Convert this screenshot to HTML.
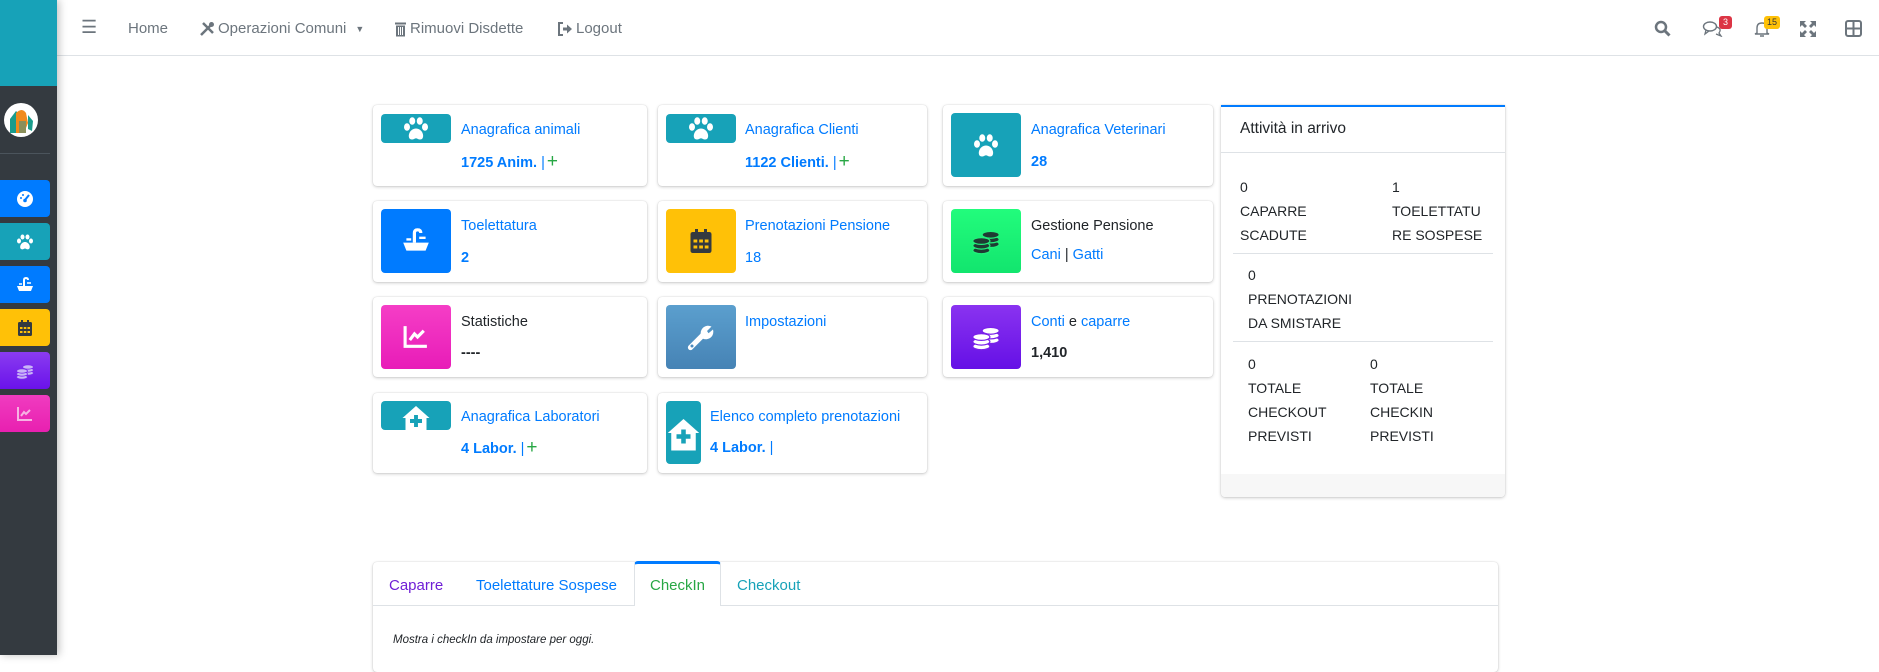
<!DOCTYPE html>
<html><head><meta charset="utf-8"><style>
*{box-sizing:border-box;margin:0;padding:0}
body{width:1879px;height:655px;overflow:hidden;background:#fff;font-family:"Liberation Sans",sans-serif;position:relative;color:#212529}
.a{position:absolute}
#side{left:0;top:0;width:57px;height:655px;background:#343a40;box-shadow:2px 0 8px rgba(0,0,0,.25);z-index:3}
#side .top{left:0;top:0;width:57px;height:86px;background:#17a2b8}
.sb{left:0;width:50px;height:37px;border-radius:0 4px 4px 0;display:flex;align-items:center;justify-content:center}
#nav{left:57px;top:0;width:1822px;height:56px;border-bottom:1px solid #dee2e6;background:#fff}
.ni{top:20px;font-size:15px;color:#6c757d;white-space:nowrap;display:flex;align-items:center;gap:3px}
.card{background:#fff;border-radius:4px;box-shadow:0 0 1px rgba(0,0,0,.2),0 1px 3px rgba(0,0,0,.2)}
.ib{position:absolute;border-radius:4px;display:flex;align-items:center;justify-content:center}
.t1{position:absolute;font-size:14.5px;color:#007bff;white-space:nowrap;line-height:18px}
.t2{position:absolute;font-size:14.5px;font-weight:bold;color:#007bff;white-space:nowrap;line-height:18px}
.plus{color:#28a745;font-weight:normal;font-size:19px;margin-left:2px}
.bar{font-weight:normal}
.rt{position:absolute;font-size:14px;color:#212529;line-height:24px}
.tab{position:absolute;top:577px;font-size:15px}
</style></head><body>
<div id="side" class="a">
 <div class="a top"></div>
 <div class="a" style="left:4px;top:103px;width:34px;height:34px;border-radius:50%;background:#fff;overflow:hidden">
  <svg width="34" height="34" viewBox="0 0 34 34"><path d="M6 30 L6 16 L12 8 L16 12 L14 30Z" fill="#1a9c8c"/><path d="M12 10 Q18 4 22 10 L24 20 L20 30 L12 30Z" fill="#f08a1c"/><path d="M15 18 L22 18 L22 30 L15 30Z" fill="#8a8f5a"/><path d="M24 12 L29 18 L28 28 L24 26Z" fill="#1a9c8c"/></svg>
 </div>
 <div class="a" style="left:0;top:153px;width:50px;height:1px;background:#4b545c"></div>
 <div class="a sb" style="top:180px;background:#007bff"><svg width="18" height="18" viewBox="0 0 18 18"><circle cx="9" cy="9" r="8" fill="#fff"/><path d="M9 10 L13 5" stroke="#007bff" stroke-width="2"/><circle cx="9" cy="10.5" r="1.8" fill="#007bff"/><circle cx="5" cy="8" r="1" fill="#007bff"/><circle cx="7" cy="5" r="1" fill="#007bff"/></svg></div>
 <div class="a sb" style="top:223px;background:#17a2b8"><svg width="20" height="18" viewBox="0 0 20 18"><ellipse cx="4" cy="8" rx="2" ry="2.5" fill="#fff"/><ellipse cx="7.5" cy="4" rx="2" ry="2.5" fill="#fff"/><ellipse cx="12.5" cy="4" rx="2" ry="2.5" fill="#fff"/><ellipse cx="16" cy="8" rx="2" ry="2.5" fill="#fff"/><path d="M10 9 C14 9 16 14 14 16 C12 17 11 15.5 10 15.5 C9 15.5 8 17 6 16 C4 14 6 9 10 9Z" fill="#fff"/></svg></div>
 <div class="a sb" style="top:266px;background:#007bff"><svg width="20" height="18" viewBox="0 0 20 18"><path d="M2 10 H18 L16 15 H4Z" fill="#fff"/><path d="M9 10 V4 Q9 2 11 2 Q13 2 13 4" stroke="#fff" stroke-width="2" fill="none"/><path d="M4 8 H7 M12 7 H16" stroke="#fff" stroke-width="1.5"/></svg></div>
 <div class="a sb" style="top:309px;background:#ffc107"><svg width="16" height="18" viewBox="0 0 16 18"><rect x="1" y="3" width="14" height="14" rx="1.5" fill="#343a40"/><rect x="4" y="1" width="2" height="4" fill="#343a40"/><rect x="10" y="1" width="2" height="4" fill="#343a40"/><g fill="#ffc107"><rect x="3" y="8" width="2.5" height="2"/><rect x="6.8" y="8" width="2.5" height="2"/><rect x="10.5" y="8" width="2.5" height="2"/><rect x="3" y="12" width="2.5" height="2"/><rect x="6.8" y="12" width="2.5" height="2"/><rect x="10.5" y="12" width="2.5" height="2"/></g></svg></div>
 <div class="a sb" style="top:352px;background:linear-gradient(#8a3cf0,#6a12ea)"><svg width="20" height="18" viewBox="0 0 20 18"><g fill="#c9b4f7" stroke="#7a28ee" stroke-width=".8"><ellipse cx="13" cy="11" rx="5.5" ry="2.2"/><ellipse cx="13" cy="8" rx="5.5" ry="2.2"/><ellipse cx="13" cy="5" rx="5.5" ry="2.2"/><ellipse cx="7" cy="15" rx="5.5" ry="2.2"/><ellipse cx="7" cy="12" rx="5.5" ry="2.2"/><ellipse cx="7" cy="9" rx="5.5" ry="2.2"/></g></svg></div>
 <div class="a sb" style="top:395px;background:linear-gradient(#f03cc0,#e820b0)"><svg width="18" height="16" viewBox="0 0 18 16"><path d="M2 1 V14 H16" stroke="#f6b3e3" stroke-width="2" fill="none"/><path d="M5 10 L8 6 L10 8 L14 4" stroke="#f6b3e3" stroke-width="2" fill="none"/></svg></div>
</div>

<div id="nav" class="a">
 <div class="a ni" style="left:24px;top:17px;font-size:18px">&#9776;</div>
 <div class="a ni" style="left:71px">Home</div>
 <div class="a ni" style="left:142px"><svg width="16" height="16" viewBox="0 0 16 16"><path d="M2 14 L12 4 M4 2 L14 12" stroke="#6c757d" stroke-width="2.5"/><circle cx="12.5" cy="3.5" r="2.5" fill="#6c757d"/></svg>Operazioni Comuni <span style="font-size:9px;margin-left:6px">&#9660;</span></div>
 <div class="a ni" style="left:337px"><svg width="13" height="16" viewBox="0 0 13 16"><rect x="1" y="1.5" width="11" height="2" fill="#6c757d"/><rect x="2" y="4.5" width="9" height="11" fill="#6c757d"/><path d="M4.5 6 V14 M6.5 6 V14 M8.5 6 V14" stroke="#fff" stroke-width="1"/></svg>Rimuovi Disdette</div>
 <div class="a ni" style="left:500px"><svg width="16" height="16" viewBox="0 0 16 16"><path d="M6 2 H2 V14 H6" stroke="#6c757d" stroke-width="2" fill="none"/><path d="M6 6.5 H10 V3.5 L15 8 L10 12.5 V9.5 H6Z" fill="#6c757d"/></svg>Logout</div>
 <svg class="a" style="left:1597px;top:20px" width="17" height="17" viewBox="0 0 17 17"><circle cx="7" cy="7" r="5" stroke="#6c757d" stroke-width="2.5" fill="none"/><path d="M11 11 L15.5 15.5" stroke="#6c757d" stroke-width="3"/></svg>
 <svg class="a" style="left:1645px;top:20px" width="22" height="17" viewBox="0 0 22 17"><ellipse cx="8" cy="6.5" rx="6.5" ry="4.5" stroke="#6c757d" stroke-width="1.4" fill="none"/><path d="M4 10 L3 14 L7 11" stroke="#6c757d" stroke-width="1.3" fill="none"/><path d="M15 7 Q20 9 17 13 L19 16 L14 14" stroke="#6c757d" stroke-width="1.3" fill="none"/></svg>
 <div class="a" style="left:1662px;top:16px;background:#dc3545;color:#fff;font-size:9px;border-radius:3px;padding:1px 4px;line-height:11px">3</div>
 <svg class="a" style="left:1697px;top:20px" width="16" height="18" viewBox="0 0 16 18"><path d="M3 13 V8 Q3 3 8 3 Q13 3 13 8 V13 L15 14 H1Z" stroke="#6c757d" stroke-width="1.4" fill="none"/><path d="M6 16 H10" stroke="#6c757d" stroke-width="1.5"/></svg>
 <div class="a" style="left:1707px;top:16px;background:#ffc107;color:#333;font-size:9px;border-radius:3px;padding:1px 3px;line-height:11px">15</div>
 <svg class="a" style="left:1743px;top:21px" width="16" height="16" viewBox="0 0 16 16" fill="#6c757d"><path d="M0 0H6L4 2 7 5 5 7 2 4 0 6Z M16 0V6L14 4 11 7 9 5 12 2 10 0Z M0 16V10L2 12 5 9 7 11 4 14 6 16Z M16 16H10L12 14 9 11 11 9 14 12 16 10Z"/></svg>
 <svg class="a" style="left:1788px;top:20px" width="17" height="17" viewBox="0 0 17 17"><rect x="1" y="1" width="15" height="15" rx="2" stroke="#6c757d" stroke-width="2" fill="none"/><path d="M8.5 1V16 M1 8.5H16" stroke="#6c757d" stroke-width="2"/></svg>
</div>

<!-- row 1 -->
<div class="a card" style="left:373px;top:105px;width:274px;height:81px">
 <div class="ib" style="left:8px;top:9px;width:70px;height:29px;background:#17a2b8"><svg width="30" height="27" viewBox="0 0 20 18"><ellipse cx="4" cy="8" rx="2" ry="2.5" fill="#fff"/><ellipse cx="7.5" cy="4" rx="2" ry="2.5" fill="#fff"/><ellipse cx="12.5" cy="4" rx="2" ry="2.5" fill="#fff"/><ellipse cx="16" cy="8" rx="2" ry="2.5" fill="#fff"/><path d="M10 9 C14 9 16 14 14 16 C12 17 11 15.5 10 15.5 C9 15.5 8 17 6 16 C4 14 6 9 10 9Z" fill="#fff"/></svg></div>
 <div class="t1" style="left:88px;top:16px">Anagrafica animali</div>
 <div class="t2" style="left:88px;top:48px">1725 Anim. <span class="bar">|</span><span class="plus">+</span></div>
</div>
<div class="a card" style="left:658px;top:105px;width:269px;height:81px">
 <div class="ib" style="left:8px;top:9px;width:70px;height:29px;background:#17a2b8"><svg width="30" height="27" viewBox="0 0 20 18"><ellipse cx="4" cy="8" rx="2" ry="2.5" fill="#fff"/><ellipse cx="7.5" cy="4" rx="2" ry="2.5" fill="#fff"/><ellipse cx="12.5" cy="4" rx="2" ry="2.5" fill="#fff"/><ellipse cx="16" cy="8" rx="2" ry="2.5" fill="#fff"/><path d="M10 9 C14 9 16 14 14 16 C12 17 11 15.5 10 15.5 C9 15.5 8 17 6 16 C4 14 6 9 10 9Z" fill="#fff"/></svg></div>
 <div class="t1" style="left:87px;top:16px">Anagrafica Clienti</div>
 <div class="t2" style="left:87px;top:48px">1122 Clienti. <span class="bar">|</span><span class="plus">+</span></div>
</div>
<div class="a card" style="left:943px;top:105px;width:270px;height:81px">
 <div class="ib" style="left:8px;top:8px;width:70px;height:64px;background:#17a2b8"><svg width="30" height="27" viewBox="0 0 20 18"><ellipse cx="4" cy="8" rx="2" ry="2.5" fill="#fff"/><ellipse cx="7.5" cy="4" rx="2" ry="2.5" fill="#fff"/><ellipse cx="12.5" cy="4" rx="2" ry="2.5" fill="#fff"/><ellipse cx="16" cy="8" rx="2" ry="2.5" fill="#fff"/><path d="M10 9 C14 9 16 14 14 16 C12 17 11 15.5 10 15.5 C9 15.5 8 17 6 16 C4 14 6 9 10 9Z" fill="#fff"/></svg></div>
 <div class="t1" style="left:88px;top:16px">Anagrafica Veterinari</div>
 <div class="t2" style="left:88px;top:48px">28</div>
</div>
<!-- row 2 -->
<div class="a card" style="left:373px;top:201px;width:274px;height:81px">
 <div class="ib" style="left:8px;top:8px;width:70px;height:64px;background:#007bff"><svg width="32" height="30" viewBox="0 0 20 18"><path d="M2 10 H18 L16 15 H4Z" fill="#fff"/><path d="M9 10 V4 Q9 2 11 2 Q13 2 13 4" stroke="#fff" stroke-width="2" fill="none"/><path d="M4 8 H7 M12 7 H16" stroke="#fff" stroke-width="1.5"/></svg></div>
 <div class="t1" style="left:88px;top:16px">Toelettatura</div>
 <div class="t2" style="left:88px;top:48px">2</div>
</div>
<div class="a card" style="left:658px;top:201px;width:269px;height:81px">
 <div class="ib" style="left:8px;top:8px;width:70px;height:64px;background:#ffc107"><svg width="24" height="28" viewBox="0 0 16 18"><rect x="1" y="3" width="14" height="14" rx="1.5" fill="#343a40"/><rect x="4" y="1" width="2" height="4" fill="#343a40"/><rect x="10" y="1" width="2" height="4" fill="#343a40"/><g fill="#ffc107"><rect x="3" y="8" width="2.5" height="2"/><rect x="6.8" y="8" width="2.5" height="2"/><rect x="10.5" y="8" width="2.5" height="2"/><rect x="3" y="12" width="2.5" height="2"/><rect x="6.8" y="12" width="2.5" height="2"/><rect x="10.5" y="12" width="2.5" height="2"/></g></svg></div>
 <div class="t1" style="left:87px;top:16px">Prenotazioni Pensione</div>
 <div class="t1" style="left:87px;top:48px">18</div>
</div>
<div class="a card" style="left:943px;top:201px;width:270px;height:81px">
 <div class="ib" style="left:8px;top:8px;width:70px;height:64px;background:linear-gradient(#22fc7c,#12e56e)"><svg width="32" height="28" viewBox="0 0 20 18"><g fill="#1f3a33" stroke="#22f07a" stroke-width=".8"><ellipse cx="13" cy="11" rx="5.5" ry="2.2"/><ellipse cx="13" cy="8" rx="5.5" ry="2.2"/><ellipse cx="13" cy="5" rx="5.5" ry="2.2"/><ellipse cx="7" cy="15" rx="5.5" ry="2.2"/><ellipse cx="7" cy="12" rx="5.5" ry="2.2"/><ellipse cx="7" cy="9" rx="5.5" ry="2.2"/></g></svg></div>
 <div class="t1" style="left:88px;top:16px;color:#212529">Gestione Pensione</div>
 <div class="t1" style="left:88px;top:45px">Cani <span style="color:#212529">|</span> Gatti</div>
</div>
<!-- row 3 -->
<div class="a card" style="left:373px;top:297px;width:274px;height:80px">
 <div class="ib" style="left:8px;top:8px;width:70px;height:64px;background:linear-gradient(#f53ec6,#e81cb8)"><svg width="28" height="26" viewBox="0 0 18 16"><path d="M2 1 V14 H16" stroke="#fff" stroke-width="2" fill="none"/><path d="M5 10 L8 6 L10 8 L14 4" stroke="#fff" stroke-width="2" fill="none"/></svg></div>
 <div class="t1" style="left:88px;top:16px;color:#212529">Statistiche</div>
 <div class="t2" style="left:88px;top:47px;color:#212529">----</div>
</div>
<div class="a card" style="left:658px;top:297px;width:269px;height:80px">
 <div class="ib" style="left:8px;top:8px;width:70px;height:64px;background:linear-gradient(#5b9fce,#4683b5)"><svg width="30" height="30" viewBox="0 0 20 20"><path d="M3 17 L11 9" stroke="#fff" stroke-width="3.5" stroke-linecap="round"/><path d="M10 9 A5 5 0 0 1 17 3 L14 6 L15 7.5 L18 5 A5 5 0 0 1 11 11Z" fill="#fff"/><circle cx="4" cy="16" r="1" fill="#4d8cbf"/></svg></div>
 <div class="t1" style="left:87px;top:16px">Impostazioni</div>
</div>
<div class="a card" style="left:943px;top:297px;width:270px;height:80px">
 <div class="ib" style="left:8px;top:8px;width:70px;height:64px;background:linear-gradient(#8a33f0,#6510e6)"><svg width="32" height="28" viewBox="0 0 20 18"><g fill="#fff" stroke="#7a20ea" stroke-width=".8"><ellipse cx="13" cy="11" rx="5.5" ry="2.2"/><ellipse cx="13" cy="8" rx="5.5" ry="2.2"/><ellipse cx="13" cy="5" rx="5.5" ry="2.2"/><ellipse cx="7" cy="15" rx="5.5" ry="2.2"/><ellipse cx="7" cy="12" rx="5.5" ry="2.2"/><ellipse cx="7" cy="9" rx="5.5" ry="2.2"/></g></svg></div>
 <div class="t1" style="left:88px;top:16px">Conti <span style="color:#212529">e</span> caparre</div>
 <div class="t2" style="left:88px;top:47px;color:#212529">1,410</div>
</div>
<!-- row 4 -->
<div class="a card" style="left:373px;top:393px;width:274px;height:80px">
 <div class="ib" style="left:8px;top:8px;width:70px;height:29px;background:#17a2b8"><svg width="30" height="30" viewBox="0 0 20 20" style="margin-top:4px"><path d="M10 2 L19 10 H17 V20 H3 V10 H1Z" fill="#fff"/><path d="M10 8 V16 M6 12 H14" stroke="#17a2b8" stroke-width="2.6"/></svg></div>
 <div class="t1" style="left:88px;top:15px">Anagrafica Laboratori</div>
 <div class="t2" style="left:88px;top:46px">4 Labor. <span class="bar">|</span><span class="plus">+</span></div>
</div>
<div class="a card" style="left:658px;top:393px;width:269px;height:80px">
 <div class="ib" style="left:8px;top:8px;width:35px;height:63px;background:#17a2b8"><svg width="36" height="36" viewBox="0 0 20 20"><path d="M10 2 L19 10 H17 V20 H3 V10 H1Z" fill="#fff"/><path d="M10 8 V16 M6 12 H14" stroke="#17a2b8" stroke-width="2.6"/></svg></div>
 <div class="t1" style="left:52px;top:15px">Elenco completo prenotazioni</div>
 <div class="t2" style="left:52px;top:46px">4 Labor. <span class="bar">|</span></div>
</div>

<!-- right card -->
<div class="a card" style="left:1221px;top:105px;width:284px;height:392px;border-top:2px solid #007bff;border-radius:0 0 4px 4px;overflow:hidden">
 <div class="a" style="left:0;top:0;width:284px;height:46px;border-bottom:1px solid #dee2e6"></div>
 <div class="a" style="left:19px;top:13px;font-size:15.5px;color:#212529">Attività in arrivo</div>
 <div class="rt" style="left:19px;top:68px">0<br>CAPARRE<br>SCADUTE</div>
 <div class="rt" style="left:171px;top:68px">1<br>TOELETTATU<br>RE SOSPESE</div>
 <div class="a" style="left:12px;top:146px;width:260px;height:1px;background:#dee2e6"></div>
 <div class="rt" style="left:27px;top:156px">0<br>PRENOTAZIONI<br>DA SMISTARE</div>
 <div class="a" style="left:12px;top:234px;width:260px;height:1px;background:#dee2e6"></div>
 <div class="rt" style="left:27px;top:245px">0<br>TOTALE<br>CHECKOUT<br>PREVISTI</div>
 <div class="rt" style="left:149px;top:245px">0<br>TOTALE<br>CHECKIN<br>PREVISTI</div>
 <div class="a" style="left:0;top:367px;width:284px;height:25px;background:#f7f7f7"></div>
</div>

<!-- tabs -->
<div class="a card" style="left:373px;top:562px;width:1125px;height:110px"></div>
<div class="a" style="left:373px;top:605px;width:1125px;height:1px;background:#dee2e6"></div>
<div class="a" style="left:634px;top:561px;width:87px;height:45px;background:#fff;border:1px solid #dee2e6;border-top:3px solid #007bff;border-bottom:none;border-radius:4px 4px 0 0"></div>
<div class="tab" style="left:389px;color:#6f1fd6">Caparre</div>
<div class="tab" style="left:476px;color:#007bff">Toelettature Sospese</div>
<div class="tab" style="left:650px;color:#28a745">CheckIn</div>
<div class="tab" style="left:737px;color:#17a2b8">Checkout</div>
<div class="a" style="left:393px;top:634px;font-size:11.5px;font-style:italic;color:#212529">Mostra i checkIn da impostare per oggi.</div>
</body></html>
